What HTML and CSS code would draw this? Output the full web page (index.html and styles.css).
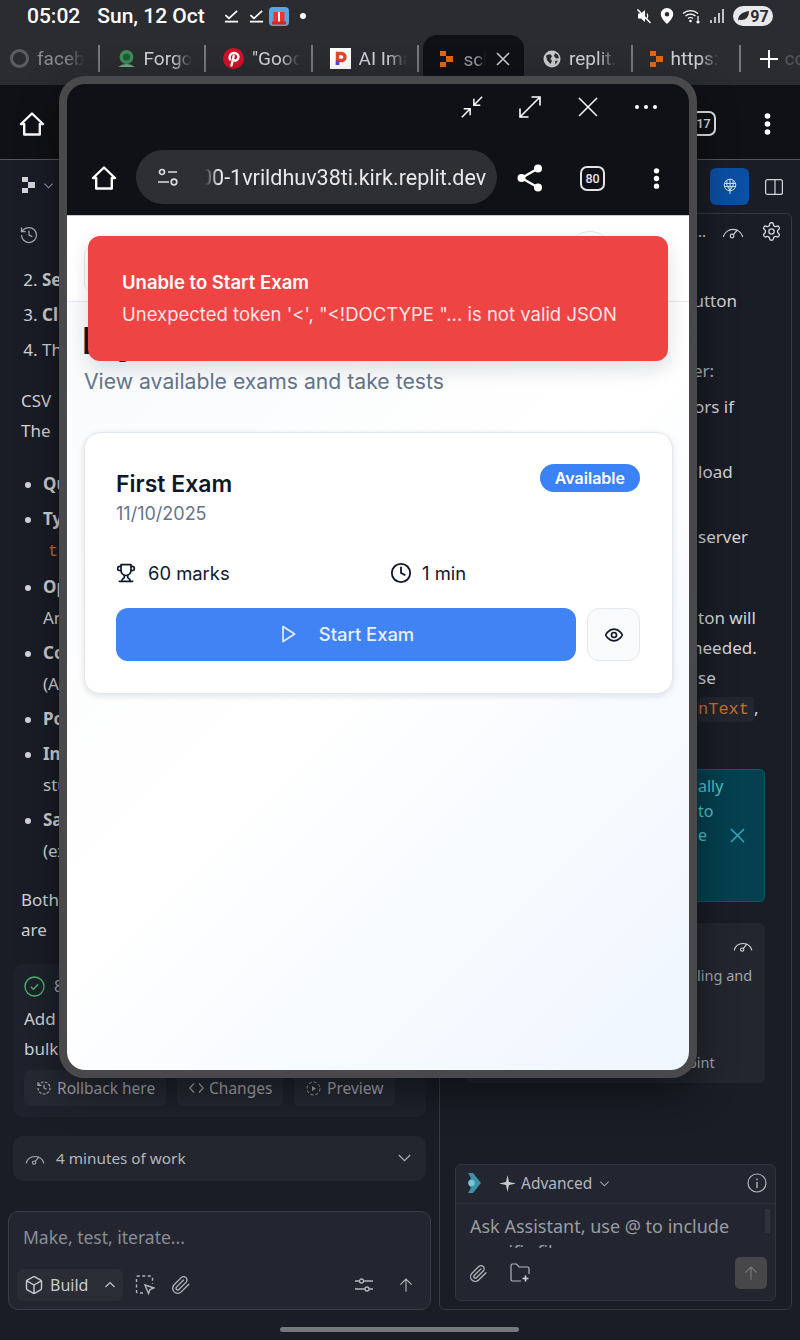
FILE: index.html
```html
<!DOCTYPE html>
<html>
<head>
  <meta charset="utf-8">
  <title>Exams</title>
  <link rel="stylesheet" href="styles.css">
</head>
<body>
  <svg class="defs" width="0" height="0">
    <symbol id="rep" viewBox="0 0 13 16"><path fill="currentColor" d="M0 0h6v5H0zM6 5h7v6H6zM0 11h6v5H0z"/></symbol>
    <symbol id="home" viewBox="0 0 26 26"><path fill="none" stroke="currentColor" stroke-width="2.4" stroke-linejoin="round" d="M13 2.5 2 13h3.2v10.5h15.6V13H24z"/></symbol>
    <symbol id="gauge" viewBox="0 0 24 24"><g fill="none" stroke="currentColor" stroke-width="1.3" stroke-linecap="round"><path d="M1.5 18a11 11 0 0 1 21 0"/><circle cx="11" cy="17.5" r="2"/><path d="m12.5 16 4-5"/></g></symbol>
    <symbol id="clip" viewBox="0 0 24 24"><path fill="none" stroke="currentColor" stroke-width="1.6" stroke-linecap="round" d="m21.44 11.05-9.19 9.19a6 6 0 0 1-8.49-8.49l8.57-8.57A4 4 0 1 1 18 8.84l-8.59 8.57a2 2 0 0 1-2.83-2.83l8.49-8.48"/></symbol>
    <symbol id="up" viewBox="0 0 24 24"><path fill="none" stroke="currentColor" stroke-width="1.5" d="M12 21V4M4.5 11.5 12 4l7.5 7.5"/></symbol>
    <symbol id="chev" viewBox="0 0 12 12"><path fill="none" stroke="currentColor" stroke-width="1.1" d="m1.5 4 4.5 4.5L10.500 4"/></symbol>
    <symbol id="kebab" viewBox="0 0 6 24"><g fill="currentColor"><circle cx="3" cy="4" r="2.800"/><circle cx="3" cy="12" r="2.800"/><circle cx="3" cy="20" r="2.800"/></g></symbol>
    <symbol id="done" viewBox="0 0 16 14"><path fill="none" stroke="#fff" stroke-width="1.800" d="m1.500 6 3.800 3.600L14 1.500M1 13h14"/></symbol>
  </svg>

  <div class="statusbar">
    <span class="clock">05:02</span>
    <span class="date">Sun, 12 Oct</span>
    <svg class="ic-done" width="15" height="16"><use href="#done"/></svg>
    <svg class="ic-done" width="15" height="16"><use href="#done"/></svg>
    <svg class="gift" width="20" height="19" viewBox="0 0 20 19"><rect width="20" height="19" rx="4" fill="#5aa5e6"/><rect x="4.500" y="5" width="11" height="10" fill="#e33"/><rect x="9" y="5" width="2" height="10" fill="#fff"/><rect x="3" y="14.500" width="14" height="3" fill="#d22"/></svg>
    <span class="dot"></span>
    <span class="spacer"></span>
    <svg width="16" height="16" viewBox="0 0 16 16"><path fill="#fff" d="M2 5.500h3L9 2v12L5 10.500H2z"/><path stroke="#fff" stroke-width="1.600" d="M1.500 1.500 14.500 15"/><path fill="none" stroke="#fff" stroke-width="1.200" d="M11 5.500q1.500 2.500 0 5"/></svg>
    <svg width="14" height="16" viewBox="0 0 14 16"><path fill="#fff" fill-rule="evenodd" d="M7 0a6.200 6.200 0 0 1 6.200 6.200C13.200 10.500 7 16 7 16S.8 10.500.8 6.200A6.200 6.200 0 0 1 7 0Zm0 4a2.300 2.300 0 1 0 0 4.600A2.300 2.300 0 0 0 7 4Z"/></svg>
    <svg width="20" height="16" viewBox="0 0 20 16"><g fill="none" stroke="#fff" stroke-width="1.200"><path d="M1 5.500a11 11 0 0 1 15 0"/><path d="M3.500 8a7.500 7.500 0 0 1 10 0"/><path d="M6 10.500a4 4 0 0 1 5 0"/><path d="M16 8v7M14.500 13.500 16 15l1.500-1.500"/></g><circle cx="8.500" cy="13" r="1.300" fill="#fff"/></svg>
    <svg width="15" height="14" viewBox="0 0 15 14"><path stroke="#fff" stroke-width="1.400" d="M1 14v-3M5 14V8M9 14V4M13 14V0"/></svg>
    <span class="battery"><svg width="12" height="10" viewBox="0 0 12 10"><path fill="#2b2c30" d="M1 10C1 4 5 1 12 0c0 6-3 9-8 9-1 0-2-.5-2-.5z"/></svg>97</span>
  </div>

  <div class="tabs">
    <div class="tab tab-first faded">
      <svg width="19" height="19" viewBox="0 0 19 19"><circle cx="9.500" cy="9.500" r="8" fill="none" stroke="#5c5d60" stroke-width="3"/></svg>
      <span class="tab-label">faceb</span>
    </div>
    <div class="tab">
      <svg width="19" height="20" viewBox="0 0 19 20"><circle cx="9.500" cy="8" r="7" fill="#3f8b5a"/><circle cx="9.500" cy="8" r="3.500" fill="#1d5c36"/><path fill="#6fa884" d="M1 18q8.500-6 17 0z"/></svg>
      <span class="tab-label">Forgo</span>
    </div>
    <div class="tab">
      <svg width="21" height="21" viewBox="0 0 21 21"><circle cx="10.500" cy="10.500" r="10.500" fill="#d3102a"/><path fill="none" stroke="#fff" stroke-width="2.400" stroke-linecap="round" d="M7 11.500C5.500 8 8 5 11 5c3 0 4.800 2 4.300 4.800-.5 2.600-3.300 3.800-4.700 2M10.700 8 8.500 17.500"/></svg>
      <span class="tab-label">"Good</span>
    </div>
    <div class="tab">
      <svg width="21" height="21" viewBox="0 0 21 21"><rect width="21" height="21" fill="#fff"/><path fill="none" stroke="#e8452c" stroke-width="3.400" d="M7.500 17V5.500h4a3.500 3.500 0 0 1 0 7h-4"/><path fill="#5a45d6" d="M5.800 12.500h3.400V17H5.800z"/></svg>
      <span class="tab-label">AI Ima</span>
    </div>
    <div class="tab tab-active">
      <svg class="ic-orange" width="13" height="16"><use href="#rep"/></svg>
      <span class="tab-label tab-short">sch</span>
      <svg width="14" height="14" viewBox="0 0 14 14"><path stroke="#c9cacc" stroke-width="1.600" d="m1 1 12 12M13 1 1 13"/></svg>
    </div>
    <div class="tab">
      <svg width="18" height="18" viewBox="0 0 18 18"><circle cx="9" cy="9" r="8.500" fill="#c9cacc"/><path fill="#2b2c30" d="M3 5.500 7 4l2 2-1.500 3L9 11l-1.500 3L4 10zM12 3l3 2 1 3-3 .5-2-2.500zM12 11l3-.5-2.500 4z"/></svg>
      <span class="tab-label">replit.</span>
    </div>
    <div class="tab tab-last">
      <svg class="ic-orange" width="13" height="16"><use href="#rep"/></svg>
      <span class="tab-label">https:</span>
    </div>
    <div class="tab-new">
      <svg width="20" height="20" viewBox="0 0 20 20"><path stroke="#fff" stroke-width="2" d="M10 1v18M1 10h18"/></svg>
      <span class="tab-new-label">co</span>
    </div>
  </div>

  <div class="appbar">
    <svg class="ic-white" width="26" height="26"><use href="#home"/></svg>
    <span class="spacer"></span>
    <span class="count-ic">17</span>
    <svg class="ic-white" width="7" height="24"><use href="#kebab"/></svg>
  </div>

  <div class="panels">
    <div class="left">
      <div class="left-top">
        <svg class="ic-pale" width="13" height="16"><use href="#rep"/></svg>
        <svg class="ic-grey" width="11" height="11"><use href="#chev"/></svg>
      </div>
      <svg class="ic-grey history" width="20" height="20" viewBox="0 0 24 24"><g fill="none" stroke="currentColor" stroke-width="1.500"><path d="M3 12a9 9 0 1 0 9-9 9.750 9.750 0 0 0-6.740 2.740L3 8"/><path d="M3 3v5h5"/><path d="M12 7v5l4 2"/></g></svg>

      <div class="chat">
        <ol class="steps" start="2">
          <li><b>Select</b></li>
          <li><b>Click</b></li>
          <li>The</li>
        </ol>
        <p class="para">CSV<br>The</p>
        <ul class="fields">
          <li><b>Question</b></li>
          <li><b>Type</b><br><code>text</code></li>
          <li><b>Options</b><br>Answers</li>
          <li><b>Correct</b><br>(Answer)</li>
          <li><b>Points</b></li>
          <li><b>Instructions</b><br>student</li>
          <li><b>Sample</b><br>(example)</li>
        </ul>
        <p class="para both">Both<br>are</p>
      </div>

      <div class="checkpoint">
        <div class="cp-head">
          <svg width="21" height="21" viewBox="0 0 21 21"><circle cx="10.500" cy="10.500" r="9.500" fill="none" stroke="#4fb872" stroke-width="1.300"/><path fill="none" stroke="#4fb872" stroke-width="1.300" d="m6.800 10.800 2.700 2.500 4.700-5"/></svg>
          <span>8</span>
        </div>
        <div class="cp-text">Add<br>bulk</div>
        <div class="cp-btns">
          <span class="chip chip-roll">
            <svg width="16" height="16" viewBox="0 0 24 24"><g fill="none" stroke="currentColor" stroke-width="1.800"><path stroke-dasharray="4 2" d="M3 12a9 9 0 1 0 9-9 9.750 9.750 0 0 0-6.740 2.740L3 8"/><path d="M3 3v5h5M12 7v5l4 2"/></g></svg>
            Rollback here
          </span>
          <span class="chip chip-chg">
            <svg width="15" height="12" viewBox="0 0 15 12"><path fill="none" stroke="currentColor" stroke-width="1.200" d="M5 1.500.8 6 5 10.500M10 1.500 14.200 6 10 10.500"/></svg>
            Changes
          </span>
          <span class="chip chip-prev">
            <svg width="15" height="15" viewBox="0 0 15 15"><circle cx="7.500" cy="7.500" r="6.500" fill="none" stroke="currentColor" stroke-dasharray="3 2"/><path fill="currentColor" d="M6 5l4 2.500L6 10z"/></svg>
            Preview
          </span>
        </div>
      </div>

      <div class="worked">
        <svg class="ic-grey" width="20" height="20"><use href="#gauge"/></svg>
        <span class="worked-text">4 minutes of work</span>
        <svg class="ic-grey" width="15" height="15"><use href="#chev"/></svg>
      </div>

      <div class="composer">
        <div class="placeholder">Make, test, iterate...</div>
        <div class="composer-row">
          <span class="build">
            <svg width="20" height="20" viewBox="0 0 24 24"><g fill="none" stroke="currentColor" stroke-width="1.700"><path d="M21 8a2 2 0 0 0-1-1.730l-7-4a2 2 0 0 0-2 0l-7 4A2 2 0 0 0 3 8v8a2 2 0 0 0 1 1.730l7 4a2 2 0 0 0 2 0l7-4A2 2 0 0 0 21 16Z"/><path d="m3.300 7 8.700 5 8.700-5M12 22V12"/></g></svg>
            <span class="build-label">Build</span>
            <svg class="flip" width="12" height="12"><use href="#chev"/></svg>
          </span>
          <svg class="sel" width="20" height="20" viewBox="0 0 20 20"><g fill="none" stroke="#b4b6bc" stroke-width="1.400"><path stroke-dasharray="3 2.500" d="M8 18H3a1.500 1.500 0 0 1-1.500-1.500v-14A1.500 1.500 0 0 1 3 1h13a1.500 1.500 0 0 1 1.500 1.500V9"/><path d="m10 10 9 3-4 1.500-1.500 4z"/></g></svg>
          <svg class="ic-mid clip" width="20" height="20"><use href="#clip"/></svg>
          <span class="spacer"></span>
          <svg class="sliders" width="20" height="16" viewBox="0 0 20 16"><g fill="none" stroke="#b4b6bc" stroke-width="1.300"><path d="M1 4h4.500M9.500 4H19M1 12h10M15 12h4"/><circle cx="7.500" cy="4" r="2"/><circle cx="13" cy="12" r="2"/></g></svg>
          <svg class="ic-mid" width="18" height="18"><use href="#up"/></svg>
        </div>
      </div>
    </div>

    <div class="right">
      <div class="right-top">
        <span class="deploy">
          <svg width="14" height="18" viewBox="0 0 14 18"><g fill="none" stroke="#cfe0f7" stroke-width="1"><circle cx="7" cy="7" r="5.800"/><path d="M1.500 5.500h11M1.500 8.500h11M7 1v15M4 2.500q-1.500 4.500 2 8.500M10 2.500q1.500 4.500-2 8.500M5 13l2-2 2 2"/></g></svg>
        </span>
        <svg width="18" height="16" viewBox="0 0 18 16"><g fill="none" stroke="#d5d6da" stroke-width="1.200"><rect x=".6" y=".6" width="16.800" height="14.800" rx="2"/><path d="M10 .6v14.800"/></g></svg>
      </div>
      <div class="box">
        <div class="box-head">
          <span class="more">...</span>
          <svg class="ic-pale" width="22" height="22"><use href="#gauge"/></svg>
          <svg class="ic-pale" width="21" height="21" viewBox="0 0 24 24"><g fill="none" stroke="currentColor" stroke-width="1.500"><path d="M12.220 2h-.44a2 2 0 0 0-2 2v.18a2 2 0 0 1-1 1.730l-.43.250a2 2 0 0 1-2 0l-.15-.08a2 2 0 0 0-2.730.730l-.22.380a2 2 0 0 0 .73 2.730l.15.100a2 2 0 0 1 1 1.720v.510a2 2 0 0 1-1 1.740l-.15.090a2 2 0 0 0-.73 2.730l.22.380a2 2 0 0 0 2.730.730l.15-.08a2 2 0 0 1 2 0l.43.250a2 2 0 0 1 1 1.730V20a2 2 0 0 0 2 2h.44a2 2 0 0 0 2-2v-.18a2 2 0 0 1 1-1.730l.43-.25a2 2 0 0 1 2 0l.15.080a2 2 0 0 0 2.730-.73l.22-.39a2 2 0 0 0-.73-2.730l-.15-.08a2 2 0 0 1-1-1.740v-.5a2 2 0 0 1 1-1.740l.15-.09a2 2 0 0 0 .73-2.730l-.22-.38a2 2 0 0 0-2.730-.73l-.15.080a2 2 0 0 1-2 0l-.43-.25a2 2 0 0 1-1-1.730V4a2 2 0 0 0-2-2z"/><circle cx="12" cy="12" r="3"/></g></svg>
        </div>
        <div class="notes">
          <div class="note edge-b">button</div>
          <div class="note gap-er">er:</div>
          <div class="note gap-s edge-s">ors if</div>
          <div class="note gap-l">load</div>
          <div class="note gap-l">server</div>
          <div class="note gap-xl">ton will</div>
          <div class="note edge-n">needed.</div>
          <div class="note">se</div>
          <div class="note"><code class="token">nText</code>,</div>
        </div>
        <div class="banner">
          <div class="banner-text">ally<br>to<br>e</div>
          <svg width="15" height="15" viewBox="0 0 15 15"><path stroke="#2fb3c9" stroke-width="1.400" d="m1 1 13 13M14 1 1 14"/></svg>
        </div>
        <div class="info">
          <div class="info-icon"><svg class="ic-pale" width="20" height="20"><use href="#gauge"/></svg></div>
          <div class="info-line">ling and</div>
          <div class="info-line info-end">point</div>
        </div>
        <div class="assist">
          <div class="assist-head">
            <svg width="15" height="22" viewBox="0 0 15 22"><path fill="#3a93a8" d="M1 1h5l8 10-8 10H1l3-5-3-5 3-5z"/><circle cx="4.500" cy="11" r="3.200" fill="#7cc4d4"/></svg>
            <svg class="spark" width="17" height="17" viewBox="0 0 17 17"><path fill="#c9cacf" d="M8.500 0 10 7l7 1.500L10 10l-1.500 7L7 10 0 8.500 7 7z"/></svg>
            <span class="assist-mode">Advanced</span>
            <svg class="ic-grey" width="11" height="11"><use href="#chev"/></svg>
            <span class="spacer"></span>
            <svg width="20" height="20" viewBox="0 0 20 20"><circle cx="10" cy="10" r="9" fill="none" stroke="#b4b6bc" stroke-width="1.200"/><path stroke="#b4b6bc" stroke-width="1.400" d="M10 9v6M10 5.500v1.700"/></svg>
          </div>
          <div class="assist-input">
            <div class="assist-ph">Ask Assistant, use @ to include specific files</div>
            <span class="assist-scroll"></span>
          </div>
          <div class="assist-row">
            <svg class="ic-mid" width="19" height="19"><use href="#clip"/></svg>
            <svg class="newfolder" width="20" height="20" viewBox="0 0 20 20"><path fill="none" stroke="#b4b6bc" stroke-width="1.200" d="M11 18H2.500A1.500 1.500 0 0 1 1 16.500v-14A1.500 1.500 0 0 1 2.500 1h4L9 4h8.500A1.500 1.500 0 0 1 19 5.500V11"/><path stroke="#d0d1d5" stroke-width="1.600" d="M15.500 12.500v6M12.500 15.500h6"/></svg>
            <span class="spacer"></span>
            <span class="send"><svg width="18" height="18"><use href="#up"/></svg></span>
          </div>
        </div>
      </div>
    </div>
  </div>

  <div class="homebar"></div>

  <!-- floating window -->
  <div class="float">
    <div class="float-controls">
      <svg width="24" height="24" viewBox="0 0 26 26"><path fill="none" stroke="#fff" stroke-width="1.600" d="M2 24 10.500 15.500M4 15h7v7M24 2 15.500 10.500M15 4v7h7"/></svg>
      <svg width="24" height="24" viewBox="0 0 24 24"><path fill="none" stroke="#fff" stroke-width="1.600" d="M2 22 22 2M13.500 2H22v8.500M10.500 22H2v-8.500"/></svg>
      <svg width="24" height="24" viewBox="-2 -2 24 24"><path stroke="#fff" stroke-width="1.500" d="m1 1 18 18M19 1 1 19"/></svg>
      <svg class="more-dots" width="24" height="6" viewBox="0 0 24 6"><g fill="#fff"><circle cx="3" cy="3" r="2"/><circle cx="12" cy="3" r="2"/><circle cx="21" cy="3" r="2"/></g></svg>
    </div>
    <div class="float-bar">
      <svg class="ic-white bar-ic" width="26" height="26"><use href="#home"/></svg>
      <div class="url">
        <svg width="22" height="18" viewBox="0 0 22 18"><g fill="none" stroke="#dcdde0" stroke-width="1.700"><circle cx="5" cy="4" r="2.500"/><path d="M11 4h9M1 14h11"/><circle cx="17" cy="14" r="2.800"/></g></svg>
        <span class="url-text">00-1vrildhuv38ti.kirk.replit.dev</span>
      </div>
      <svg class="bar-ic" width="26" height="28" viewBox="0 0 26 28"><g fill="#fff"><circle cx="4.500" cy="14" r="4"/><circle cx="21" cy="4.500" r="4"/><circle cx="21" cy="23.500" r="4"/></g><path stroke="#fff" stroke-width="2.400" d="M4.500 14 21 4.500M4.500 14 21 23.500"/></svg>
      <span class="count-ic count-win bar-ic">80</span>
      <svg class="ic-white bar-ic" width="7" height="23"><use href="#kebab"/></svg>
    </div>
    <div class="site">
      <div class="site-nav">
        <span class="nav-left"></span>
        <span class="nav-avatar"></span>
      </div>
      <div class="site-main">
        <h1 class="page-title">My Exams</h1>
        <p class="page-sub">View available exams and take tests</p>
        <div class="exam-card">
          <div class="exam-top">
            <div>
              <h2 class="exam-title">First Exam</h2>
              <div class="exam-date">11/10/2025</div>
            </div>
            <span class="badge">Available</span>
          </div>
          <div class="exam-stats">
            <div class="stat stat-marks">
              <svg width="20" height="20" viewBox="0 0 24 24"><g fill="none" stroke="#0f172a" stroke-width="2" stroke-linecap="round" stroke-linejoin="round"><path d="M6 9H4.500a2.500 2.500 0 0 1 0-5H6"/><path d="M18 9h1.500a2.500 2.500 0 0 0 0-5H18"/><path d="M4 22h16"/><path d="M10 14.660V17c0 .55-.47.98-.97 1.210C7.850 18.750 7 20.240 7 22"/><path d="M14 14.660V17c0 .55.47.98.97 1.210C16.150 18.750 17 20.240 17 22"/><path d="M18 2H6v7a6 6 0 0 0 12 0V2Z"/></g></svg>
              60 marks
            </div>
            <div class="stat">
              <svg width="22" height="22" viewBox="0 0 24 24"><g fill="none" stroke="#0f172a" stroke-width="2" stroke-linecap="round" stroke-linejoin="round"><circle cx="12" cy="12" r="10"/><path d="M12 6v6l4 2"/></g></svg>
              1 min
            </div>
          </div>
          <div class="exam-actions">
            <button class="btn-start">
              <svg width="20" height="20" viewBox="0 0 24 24"><path fill="none" stroke="#e4eeff" stroke-width="2" stroke-linejoin="round" d="M6 3 20 12 6 21z"/></svg>
              Start Exam
            </button>
            <button class="btn-eye">
              <svg width="20" height="20" viewBox="0 0 24 24"><g fill="none" stroke="#0f172a" stroke-width="2" stroke-linecap="round" stroke-linejoin="round"><path d="M2 12s3-7 10-7 10 7 10 7-3 7-10 7-10-7-10-7Z"/><circle cx="12" cy="12" r="3"/></g></svg>
            </button>
          </div>
        </div>
      </div>
      <div class="toast">
        <div class="toast-title">Unable to Start Exam</div>
        <div class="toast-text">Unexpected token '&lt;', "&lt;!DOCTYPE "... is not valid JSON</div>
      </div>
    </div>
  </div>
</body>
</html>
```

FILE: styles.css
```css
html, body {
  margin: 0;
  height: 100%;
}
body {
  position: relative;
  width: 800px;
  height: 1340px;
  overflow: hidden;
  background: #1a1d26;
  font-family: "Noto Sans", sans-serif;
  color: #d5d6da;
  display: flex;
  flex-direction: column;
}
svg { flex: none; display: block; }
.defs { position: absolute; }
.spacer { flex: 1; }
.ic-white { color: #fff; }
.ic-pale { color: #d5d6da; }
.ic-grey { color: #a9abb2; }
.ic-mid { color: #b4b6bc; }
.ic-orange { color: #e8670f; }

/* status + tabs */
.statusbar {
  height: 32px;
  padding: 0 27px;
  background: #2b2c30;
  display: flex;
  align-items: center;
  color: #fff;
  font-family: Roboto, sans-serif;
  font-weight: 500;
  font-size: 21px;
  gap: 8px;
}
.clock { margin-right: 9px; }
.date { margin-right: 11px; }
.ic-done + .ic-done { margin-left: 2px; }
.gift { margin-left: -3px; }
.dot { width: 6px; height: 6px; border-radius: 50%; background: #fff; margin-left: 3px; }
.battery {
  width: 40px;
  height: 20px;
  border-radius: 10px;
  background: #e9e9ea;
  color: #2b2c30;
  font-size: 16px;
  font-weight: 700;
  display: flex;
  align-items: center;
  justify-content: center;
  gap: 1px;
}
.tabs {
  height: 53px;
  background: #2b2c30;
  display: flex;
  align-items: center;
  font-family: Roboto, sans-serif;
  font-size: 19px;
  color: #d0d1d4;
  overflow: hidden;
}
.tab {
  width: 106.500px;
  height: 27px;
  box-sizing: border-box;
  padding-left: 17px;
  display: flex;
  align-items: center;
  gap: 8px;
  border-right: 2.500px solid #77787c;
  flex: none;
}
.tab-first { margin-left: -7px; }
.faded { color: #8a8b8e; }
.tab-label {
  width: 48px;
  overflow: hidden;
  white-space: nowrap;
  -webkit-mask-image: linear-gradient(90deg, #000 60%, transparent);
  mask-image: linear-gradient(90deg, #000 60%, transparent);
}
.tab-active {
  width: 101px;
  height: 48px;
  align-self: flex-start;
  margin: 3px 2px 0 4px;
  padding: 0 14px 0 17px;
  border-right: 0;
  border-radius: 14px 14px 0 0;
  background: #101116;
  color: #98999c;
  justify-content: space-between;
  gap: 4px;
}
.tab-short { width: 22px; }
.tab-last { width: 108px; }
.tab-new { display: flex; align-items: center; gap: 6px; margin-left: 18px; flex: none; color: #55565a; }
.tab-new-label { width: 20px; }

.appbar {
  height: 75px;
  background: #101116;
  border-bottom: 1px solid #56575c;
  box-sizing: border-box;
  display: flex;
  align-items: center;
  padding: 3px 29px 0 19px;
  gap: 48px;
}
.count-ic {
  width: 25px;
  height: 25px;
  box-sizing: border-box;
  border: 2.500px solid #e4e4e6;
  border-radius: 7px;
  color: #e4e4e6;
  font-family: Roboto, sans-serif;
  font-weight: 500;
  font-size: 12.500px;
  display: flex;
  align-items: center;
  justify-content: center;
}

/* panels behind the window */
.panels {
  flex: 1;
  display: flex;
  min-height: 0;
}
.left {
  width: 439px;
  flex: none;
  position: relative;
  display: flex;
  flex-direction: column;
}
.left-top {
  height: 50px;
  padding: 0 0 0 22px;
  display: flex;
  align-items: center;
  gap: 8px;
}
.history { margin: 15px 0 0 19px; }
.chat {
  margin-top: 20px;
  height: 700px;
  padding-left: 21px;
  font-size: 17px;
  line-height: 30px;
  color: #d5d6da;
  white-space: nowrap;
}
.chat b { font-weight: 700; }
.steps { margin: 0; padding: 0 0 0 21px; }
.steps li { margin-bottom: 5px; }
.para { margin: 21px 0 0; }
.fields { margin: 22px 0 0; padding: 0 0 0 22px; }
.fields li { margin-bottom: 4px; line-height: 31px; }
.fields li::marker { font-size: 16px; }
.fields code { font-family: "Liberation Mono", monospace; color: #c9702a; margin-left: 5px; }
.both { margin-top: 19px; }

.checkpoint {
  position: absolute;
  left: 13px;
  top: 804px;
  width: 413px;
  height: 153px;
  box-sizing: border-box;
  padding: 11px 11px 0;
  border-radius: 10px;
  background: #1e222c;
}
.cp-head { display: flex; align-items: center; gap: 9px; height: 22px; color: #a9abb2; font-size: 16px; }
.cp-text { margin-top: 7px; font-size: 17px; line-height: 30px; color: #d5d6da; }
.cp-btns { display: flex; gap: 11px; margin-top: 6px; }
.chip {
  height: 36px;
  box-sizing: border-box;
  border-radius: 6px;
  background: #262933;
  color: #a4a6ad;
  font-size: 15.500px;
  display: flex;
  align-items: center;
  padding-left: 12px;
  gap: 5px;
}
.chip-roll { width: 142px; }
.chip-chg { width: 106px; }
.chip-prev { width: 101px; gap: 6px; }

.worked {
  position: absolute;
  left: 13px;
  top: 976px;
  width: 413px;
  height: 45px;
  box-sizing: border-box;
  padding: 0 14px 2px 12px;
  border-radius: 10px;
  background: #23262f;
  display: flex;
  align-items: center;
  gap: 11px;
  font-size: 15.300px;
  color: #b4b6bc;
}
.worked-text { flex: 1; }

.composer {
  position: absolute;
  left: 8px;
  top: 1051px;
  width: 423px;
  height: 99px;
  box-sizing: border-box;
  border: 1px solid #3a3d47;
  border-radius: 10px;
  background: #232630;
  padding: 0 8px;
}
.placeholder { margin: 11px 0 0 6px; font-size: 17.500px; line-height: 28px; color: #8b8d95; }
.composer-row { display: flex; align-items: center; margin-top: 18px; }
.build {
  width: 106px;
  height: 32px;
  box-sizing: border-box;
  background: #2a2d36;
  border-radius: 6px;
  padding: 0 7px;
  display: flex;
  align-items: center;
  gap: 6px;
  color: #c9cacf;
  font-size: 16px;
}
.build-label { flex: 1; }
.flip { transform: rotate(180deg); }
.sel { margin-left: 12px; }
.clip { margin-left: 16px; }
.sliders { margin-right: 23px; }
.composer-row > svg:last-child { margin-right: 7px; }

.right {
  width: 353px;
  flex: none;
  display: flex;
  flex-direction: column;
  padding-bottom: 30px;
  box-sizing: border-box;
}
.right-top {
  height: 53px;
  flex: none;
  display: flex;
  align-items: center;
  justify-content: flex-end;
  gap: 16px;
  padding: 0 9px 0 0;
  box-sizing: border-box;
}
.deploy {
  width: 39px;
  height: 37px;
  border-radius: 6px;
  background: #0b4fa3;
  display: flex;
  align-items: center;
  justify-content: center;
}
.box {
  flex: 1;
  border: 1px solid #363944;
  border-radius: 6px;
  display: flex;
  flex-direction: column;
  padding-bottom: 8px;
  box-sizing: border-box;
  font-size: 17px;
  color: #d5d6da;
}
.box-head {
  height: 34px;
  display: flex;
  align-items: center;
  padding-left: 254px;
  gap: 17px;
}
.more { width: 11px; line-height: 20px; font-size: 15px; }
.notes { margin-top: 38px; padding-left: 258px; line-height: 30px; white-space: nowrap; }
.edge-b { margin-left: -15px; }
.edge-s { margin-left: -4px; }
.edge-n { margin-left: -6px; }
.gap-er { margin: 40px 0 0 -5px; color: #b4b6bc; }
.gap-l { margin-top: 35px; }
.gap-s { margin-top: 6px; }
.gap-xl { margin-top: 51px; }
.token {
  font-family: "Liberation Mono", monospace;
  font-size: 17px;
  color: #c9702a;
  background: #23262f;
  padding: 3px 5px 3px 0;
  border-radius: 4px;
}
.banner {
  margin: 44px 26px 0 26px;
  height: 133px;
  box-sizing: border-box;
  border: 1px solid #0b5a6c;
  border-radius: 5px;
  background: #04404f;
  color: #4fc3d0;
  display: flex;
  align-items: center;
  justify-content: space-between;
  padding: 0 19px 0 231px;
  flex: none;
}
.banner-text { align-self: flex-start; padding-top: 4px; line-height: 24.500px; font-size: 16px; }
.info {
  margin: 21px 26px 0 26px;
  height: 160px;
  flex: none;
  border-radius: 6px;
  background: #23262f;
  box-sizing: border-box;
  padding-left: 231px;
  font-size: 14.500px;
  color: #a4a6ad;
}
.info-icon { display: flex; justify-content: flex-end; padding: 12px 12px 0 0; }
.info-line { line-height: 24px; margin-top: 8px; }
.info-end { margin: 63px 0 0 -18px; }
.assist {
  margin: auto 15px 0 15px;
  height: 137px;
  flex: none;
  box-sizing: border-box;
  border: 1px solid #333640;
  border-radius: 6px;
  background: #232630;
}
.assist-head {
  height: 39px;
  box-sizing: border-box;
  border-bottom: 1px solid #2b2e38;
  display: flex;
  align-items: center;
  padding: 0 8px 2px 11px;
  gap: 5px;
  font-size: 15.500px;
  color: #b4b6bc;
}
.spark { margin-left: 12px; }
.assist-mode { margin-right: 2px; }
.assist-input { position: relative; height: 44px; overflow: hidden; padding: 9px 0 0 14px; box-sizing: border-box; }
.assist-ph { width: 285px; font-size: 18px; line-height: 26px; color: #9a9ca3; white-space: normal; }
.assist-scroll { position: absolute; right: 5px; top: 5px; width: 5px; height: 24px; background: #2f323c; }
.assist-row {
  display: flex;
  align-items: center;
  padding: 9px 8px 0 13px;
  gap: 22px;
}
.send {
  width: 32px;
  height: 32px;
  border-radius: 5px;
  background: #47474a;
  color: #77777a;
  display: flex;
  align-items: center;
  justify-content: center;
}
.homebar {
  position: absolute;
  left: 280px;
  bottom: 8px;
  width: 239px;
  height: 5px;
  border-radius: 3px;
  background: #77787c;
}

/* floating window */
.float {
  position: absolute;
  left: 59px;
  top: 76px;
  width: 638px;
  height: 1002px;
  box-sizing: border-box;
  border: 8px solid #49494b;
  border-radius: 26px;
  background: #101116;
  box-shadow: 0 14px 40px rgba(0, 0, 0, 0.45);
  display: flex;
  flex-direction: column;
  overflow: hidden;
}
.float-controls {
  height: 46px;
  flex: none;
  display: flex;
  align-items: center;
  justify-content: flex-end;
  gap: 34px;
  padding: 0 31px 0 0;
}
.float-bar {
  height: 85px;
  flex: none;
  box-sizing: border-box;
  display: flex;
  align-items: center;
  padding: 9px 29px 0 24px;
}
.bar-ic { margin-top: 2px; }
.url {
  width: 361px;
  height: 54px;
  margin-left: 19px;
  margin-right: 20px;
  border-radius: 27px;
  background: #2e2f33;
  display: flex;
  align-items: center;
  box-sizing: border-box;
  padding-left: 21px;
  flex: none;
}
.url-text {
  margin-left: 21px;
  width: 288px;
  font-family: Roboto, sans-serif;
  font-size: 21.500px;
  color: #e8e8ea;
  white-space: nowrap;
  overflow: hidden;
  -webkit-mask-image: linear-gradient(90deg, transparent 5px, #000 18px);
  mask-image: linear-gradient(90deg, transparent 5px, #000 18px);
}
.count-win { margin-left: 37px; margin-right: 48px; }

.site {
  flex: 1;
  position: relative;
  min-height: 0;
  display: flex;
  flex-direction: column;
  font-family: Inter, sans-serif;
  background: linear-gradient(135deg, #f8fafc, #fff 50%, #eff6ff);
  border-top: 1px solid #c9cacc;
}
.site-nav {
  height: 86px;
  flex: none;
  background: #fff;
  border-bottom: 1px solid #e2e8f0;
  box-sizing: border-box;
  display: flex;
  justify-content: space-between;
  padding: 15px 75px 0 17px;
}
.nav-left { width: 60px; height: 46px; border: 1px solid #e2e8f0; border-radius: 10px; margin-top: 14px; }
.nav-avatar { width: 46px; height: 46px; border: 1px solid #e2e8f0; border-radius: 50%; }
.site-main { padding: 19px 16px 0 17px; }
.page-title {
  margin: 0 0 0 -2px;
  font-size: 37px;
  line-height: 40px;
  font-weight: 700;
  color: #0f172a;
}
.page-sub {
  margin: 6px 0 0;
  font-size: 21.200px;
  line-height: 28px;
  color: #64748b;
}
.exam-card {
  margin-top: 37px;
  height: 262px;
  box-sizing: border-box;
  border: 1px solid #e2e8f0;
  border-radius: 16px;
  background: #fff;
  box-shadow: 0 2px 6px rgba(15, 23, 42, 0.12);
  padding: 31px 32px 0 31px;
}
.exam-top { display: flex; justify-content: space-between; align-items: flex-start; height: 63px; }
.exam-title {
  margin: 4px 0 0;
  font-size: 23px;
  line-height: 32px;
  font-weight: 600;
  color: #0f172a;
}
.exam-date { margin-top: 2px; font-size: 18px; line-height: 24px; color: #64748b; }
.badge {
  height: 28px;
  padding: 0 15px;
  border-radius: 14px;
  background: #3b82f6;
  color: #fff;
  font-size: 16px;
  font-weight: 600;
  line-height: 28px;
}
.exam-stats {
  display: grid;
  grid-template-columns: 1fr 1fr;
  gap: 24px;
  margin-top: 32px;
}
.stat {
  display: flex;
  align-items: center;
  gap: 10px;
  height: 28px;
  font-size: 18.400px;
  color: #0f172a;
}
.stat-marks { gap: 12px; }
.exam-actions { display: flex; gap: 11px; margin-top: 21px; }
.btn-start {
  flex: 1;
  height: 53px;
  border: 0;
  border-radius: 12px;
  background: #3f83f4;
  color: #e9f1ff;
  font-family: Inter, sans-serif;
  font-size: 18.400px;
  font-weight: 500;
  display: flex;
  align-items: center;
  justify-content: center;
  gap: 21px;
  padding: 0 0 2px;
}
.btn-eye {
  width: 53px;
  height: 53px;
  flex: none;
  border: 1px solid #e2e8f0;
  border-radius: 12px;
  background: #f8fafc;
  display: flex;
  align-items: center;
  justify-content: center;
  padding: 0;
}
.toast {
  position: absolute;
  left: 21px;
  top: 20px;
  width: 580px;
  height: 125px;
  box-sizing: border-box;
  border-radius: 12px;
  background: #ef4444;
  box-shadow: 0 8px 20px rgba(15, 23, 42, 0.14);
  padding: 34px 34px 0;
  color: #fff;
}
.toast-title { font-size: 18.500px; font-weight: 600; line-height: 24px; }
.toast-text { margin-top: 8px; font-size: 18.500px; line-height: 24px; color: rgba(255, 255, 255, 0.88); white-space: nowrap; }
```
